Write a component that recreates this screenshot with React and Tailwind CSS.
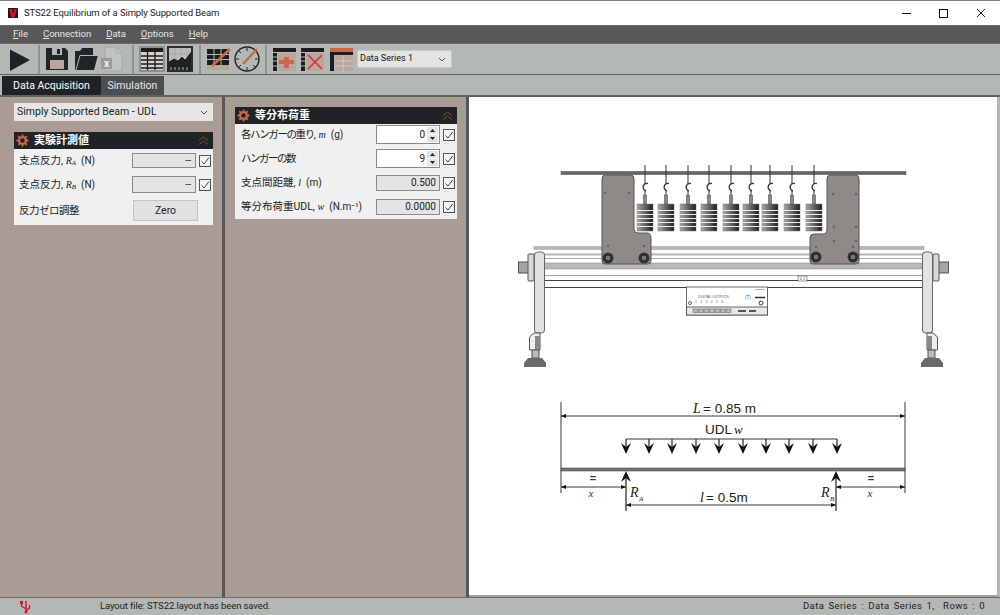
const ui = { fontFamily: 'Roboto, "Noto Sans CJK JP", sans-serif' };

function CheckBox() {
  return (
    <span className="w-[12px] h-[12px] border border-[#555] bg-[#f4f4f4] flex items-center justify-center shrink-0">
      <svg width="10" height="10" viewBox="0 0 10 10">
        <path d="M1.5 5.5 L4 8 L9 1.5" fill="none" stroke="#444" strokeWidth="1" />
      </svg>
    </span>
  );
}

function Gear() {
  return (
    <svg width="13" height="13" viewBox="0 0 14 14" className="shrink-0">
      <circle cx="7" cy="7" r="3.6" fill="none" stroke="#c8694a" strokeWidth="2.4" />
      <path
        d="M7 0.5V3M7 11V13.5M0.5 7H3M11 7H13.5M2.4 2.4L4 4M10 10L11.6 11.6M11.6 2.4L10 4M4 10L2.4 11.6"
        stroke="#c8694a"
        strokeWidth="2"
      />
    </svg>
  );
}

function GroupHeader({ title }) {
  return (
    <div className="h-[17px] bg-[#202326] flex items-center pl-[2px] pr-[4px]">
      <Gear />
      <span className="ml-[5px] text-white text-[11px] font-bold leading-none flex-1">{title}</span>
      <svg width="11" height="10" viewBox="0 0 11 10">
        <path d="M1 4.5L5.5 1L10 4.5M1 8.5L5.5 5L10 8.5" fill="none" stroke="#8a4a38" strokeWidth="1" />
      </svg>
    </div>
  );
}

function Unit({ sym, unit, sub }) {
  return (
    <>
      <i className="text-[10px]" style={{ fontFamily: '"Liberation Serif", serif' }}>
        {sym}
        {sub && <sub className="text-[7px]">{sub}</sub>}
      </i>
      <span className="ml-[5px] text-[10px]">{unit}</span>
    </>
  );
}

function Spinner() {
  return (
    <span className="w-[11px] h-[15px] mr-[1px] flex flex-col gap-[1px] shrink-0">
      <span className="flex-1 bg-[#e4e4e4] flex items-center justify-center">
        <svg width="5" height="3" viewBox="0 0 5 3"><path d="M0 3L2.5 0L5 3Z" fill="#222" /></svg>
      </span>
      <span className="flex-1 bg-[#e4e4e4] flex items-center justify-center">
        <svg width="5" height="3" viewBox="0 0 5 3"><path d="M0 0L2.5 3L5 0Z" fill="#222" /></svg>
      </span>
    </span>
  );
}

function ToolSep({ className }) {
  return <span className={`w-[2px] h-[29px] bg-[#8f948f] mr-[4px] shrink-0 ${className}`} />;
}

function TableIcon() {
  return (
    <svg width="26" height="26" viewBox="0 0 26 26">
      <rect x="0" y="0" width="26" height="26" fill="#8d918d" />
      <rect x="2" y="2" width="22" height="22" fill="#d8d2c8" />
      <rect x="2" y="2" width="22" height="4" fill="#1d1d1d" />
      <path d="M2 10H24M2 14H24M2 18H24M2 22H24M8.5 2V24M16 2V24" stroke="#1d1d1d" strokeWidth="1.3" />
    </svg>
  );
}

function ChartIcon() {
  return (
    <svg width="26" height="26" viewBox="0 0 26 26">
      <rect x="0" y="0" width="26" height="26" fill="#2a2d2e" />
      <rect x="2" y="2" width="22" height="22" fill="#b9bcb6" />
      <path d="M2 8H24M2 13H24M8 2V18M14 2V18M20 2V18" stroke="#9b9f9a" strokeWidth="0.6" />
      <path d="M2 15L7 12L11 14L15 10L18 13L24 5V24H2Z" fill="#1f2122" />
      <path d="M2 15L7 12L11 14L15 10L18 13L24 5" stroke="#f2f2f2" fill="none" strokeWidth="0.7" />
      <path d="M4 24V21M8 24V21M12 24V21M16 24V21M20 24V21" stroke="#d8d8d8" strokeWidth="0.8" />
    </svg>
  );
}

function Toolbar() {
  return (
    <div className="h-[31px] bg-[#b4b8b4] flex items-center pl-[2px] border-b border-[#5f625f] shrink-0">
      <svg width="32" height="26" viewBox="0 0 32 26" className="shrink-0">
        <path d="M8 3.5L28 14L8 25Z" fill="#1f2326" />
      </svg>
      <ToolSep className="ml-[4px]" />
      <svg width="24" height="24" viewBox="0 0 24 24" className="shrink-0 ml-[1px]">
        <path d="M1 1H20L23 4V23H1Z" fill="#222527" />
        <rect x="7" y="1" width="10" height="7" fill="#b4b8b4" />
        <rect x="12" y="2" width="3" height="5" fill="#222527" />
        <rect x="5" y="13" width="14" height="9" fill="#b9a79d" />
      </svg>
      <svg width="24" height="24" viewBox="0 0 24 24" className="shrink-0 ml-[5px]">
        <path d="M1 23V4H6L8 1H19V8H24L20 23Z" fill="#222527" />
        <path d="M2 23L6 8.500H24" fill="none" stroke="#b4b8b4" strokeWidth="1" />
      </svg>
      <svg width="24" height="26" viewBox="0 0 24 26" className="shrink-0 ml-[2px]">
        <path d="M5 1H16L22 7V25H5Z" fill="#c0c3bf" stroke="#a6a9a5" />
        <path d="M16 1V7H22" fill="none" stroke="#a6a9a5" />
        <rect x="1" y="12" width="11" height="11" fill="#9a9c99" />
        <text x="6.5" y="21" fontSize="10" fontWeight="700" fill="#f4f4f4" textAnchor="middle" style={ui}>x</text>
      </svg>
      <ToolSep className="ml-[8px]" />
      <span className="ml-[1px] flex gap-[2px]">
        <TableIcon />
        <ChartIcon />
      </span>
      <ToolSep className="ml-[6px]" />
      <svg width="26" height="26" viewBox="0 0 26 26" className="shrink-0 ml-[1px]">
        <rect x="1" y="3" width="22" height="16" fill="#1d1d1d" />
        <path d="M1 8.500H23M1 13.500H23M8 3V24M15 3V24" stroke="#b4b8b4" strokeWidth="1" />
        <rect x="1" y="19" width="22" height="5" fill="#b9a79d" />
        <path d="M6 20L24 3" stroke="#c8694a" strokeWidth="2.6" />
      </svg>
      <svg width="26" height="26" viewBox="0 0 26 26" className="shrink-0 ml-[2px]">
        <circle cx="13" cy="13" r="12" fill="#b4b8b4" stroke="#222" strokeWidth="1.4" />
        <path d="M13 2V5M13 21V24M2 13H5M21 13H24M5 5L7 7M19 19L21 21M5 21L7 19" stroke="#222" strokeWidth="1" />
        <path d="M9 18L23 3" stroke="#c8694a" strokeWidth="2.4" />
      </svg>
      <ToolSep className="ml-[5px]" />
      <svg width="24" height="24" viewBox="0 0 24 24" className="shrink-0 ml-[1px]">
        <rect x="1" y="1" width="23" height="4" fill="#1d1d1d" />
        <rect x="1" y="6" width="4" height="18" fill="#1d1d1d" />
        <path d="M1 10H5M1 14H5M1 19H5" stroke="#b4b8b4" />
        <rect x="6" y="6" width="18" height="18" fill="#b9a79d" />
        <path d="M12 10H17V13H22V17H17V21H12V17H7V13H12Z" fill="#c8694a" />
      </svg>
      <svg width="24" height="24" viewBox="0 0 24 24" className="shrink-0 ml-[5px]">
        <rect x="0" y="1" width="23" height="4" fill="#1d1d1d" />
        <rect x="0" y="6" width="4" height="18" fill="#1d1d1d" />
        <path d="M0 10H4M0 14H4M0 19H4" stroke="#b4b8b4" />
        <rect x="5" y="6" width="18" height="18" fill="#b9a79d" />
        <path d="M7 8L21 22M21 8L7 22" stroke="#e8213c" strokeWidth="1.5" />
      </svg>
      <svg width="23" height="24" viewBox="0 0 23 24" className="shrink-0 ml-[5px]">
        <rect x="0" y="1" width="23" height="4" fill="#c8694a" />
        <rect x="0" y="5" width="23" height="3" fill="#1d1d1d" />
        <rect x="0" y="8" width="4" height="16" fill="#1d1d1d" />
        <rect x="5" y="9" width="18" height="15" fill="#b9a79d" />
        <path d="M5 14H23M5 19H23M13 9V24" stroke="#cfc8be" />
      </svg>
      <div className="ml-[4px] w-[95px] h-[18px] bg-[#e4e4e4] border border-[#c8c8c8] flex items-center pl-[2px] text-[9px] text-[#111] justify-between pr-[5px]">
        Data Series 1
        <svg width="8" height="5" viewBox="0 0 8 5"><path d="M1 1L4 4L7 1" fill="none" stroke="#555" /></svg>
      </div>
    </div>
  );
}

function Diagram() {
  const hangers = [645, 666, 688, 709, 731, 751, 770, 792, 814];
  const loads = [626, 649, 672, 696, 719, 743, 766, 789, 813, 837];
  const math = { fontFamily: '"Liberation Serif", serif', fontStyle: "italic" };
  const sans = { fontFamily: '"Liberation Sans", sans-serif' };

  const supportEnd = (
    <>
      <rect x="518.500" y="262" width="10" height="11" fill="#a5a5a5" stroke="#555" />
      <rect x="528" y="254" width="6" height="27" rx="1" fill="#d8d8d8" stroke="#555" />
      <rect x="534.500" y="252" width="10" height="81" rx="3" fill="#e1e3df" stroke="#666" />
      <path d="M529.500 337L534 333H540V350H529.500Z" fill="#eee" stroke="#555" />
      <rect x="535" y="336" width="5" height="14" fill="#888" />
      <rect x="532" y="350" width="7" height="8" fill="#bbb" stroke="#555" />
      <path d="M528 358H542L546 363V367H524V363Z" fill="#6a6a6a" />
    </>
  );

  return (
    <svg viewBox="469 97 528 498" className="w-full h-full block">
      <defs>
        <linearGradient id="weight" x1="0" x2="1" y1="0" y2="0">
          <stop offset="0" stopColor="#a8a8a8" />
          <stop offset="1" stopColor="#1e1e1e" />
        </linearGradient>
      </defs>
      {/* beam rails */}
      <rect x="534" y="246.500" width="390" height="3" fill="#b8b8b8" stroke="#999" strokeWidth="0.5" />
      <rect x="534" y="253.500" width="390" height="2" fill="#b4b4b4" />
      <rect x="534" y="263" width="390" height="6" fill="#b8b8b8" stroke="#888" strokeWidth="0.5" />
      <path d="M534 258.500H924M534 275.500H924" stroke="#a4a4a4" strokeWidth="1" />
      <path d="M534 280.500H924M534 287.500H924" stroke="#444" strokeWidth="1" />
      {/* overhead bar */}
      <rect x="561" y="171.500" width="345" height="3" fill="#666" stroke="#444" strokeWidth="0.5" />
      {/* hangers */}
      {hangers.map((x) => (
        <g key={x}>
          <path d={`M${x} 165V184`} stroke="#333" strokeWidth="1" />
          <path d={`M${x + 3} 183.500A3.800 3.800 0 1 0 ${x + 1} 191`} fill="none" stroke="#333" strokeWidth="1.300" />
          <path d={`M${x} 190V195`} stroke="#333" strokeWidth="1" />
          <rect x={x - 1.500} y="195" width="3" height="9" fill="#888" stroke="#444" strokeWidth="0.5" />
          <rect x={x - 8} y="204" width="16" height="27" fill="url(#weight)" stroke="#777" strokeWidth="0.5" />
          <path
            d={`M${x - 8} 210.500H${x + 8}M${x - 8} 214.500H${x + 8}M${x - 8} 218.500H${x + 8}M${x - 8} 222.500H${x + 8}M${x - 8} 226.500H${x + 8}`}
            stroke="#eee"
            strokeWidth="1"
          />
        </g>
      ))}
      {/* carriages */}
      <path
        d="M605 175H631Q634 175 634 179V229Q634 233 638 233H647Q651 233 651 238V261Q651 264 648 264H605Q602 264 602 261V179Q602 175 605 175Z"
        fill="#8e8a88"
        stroke="#555"
      />
      <path
        d="M830 175H856Q859 175 859 179V261Q859 264 856 264H813Q810 264 810 261V238Q810 234 814 234H823Q827 234 827 229V179Q827 175 830 175Z"
        fill="#8e8a88"
        stroke="#555"
      />
      {[[605, 193], [629, 193], [608, 246], [644, 246], [833, 194], [856, 194], [834, 227], [856, 227], [834, 241], [856, 241], [816, 247], [853, 247]].map(([x, y]) => (
        <circle key={`${x}-${y}`} cx={x} cy={y} r="1.300" fill="#666" />
      ))}
      {[[608, 258], [644, 258], [816, 257], [853, 257]].map(([x, y]) => (
        <g key={x}>
          <circle cx={x} cy={y} r="5.500" fill="#333" />
          <circle cx={x} cy={y} r="3" fill="#777" stroke="#222" />
        </g>
      ))}
      {/* end supports */}
      {supportEnd}
      <g transform="translate(1467,0) scale(-1,1)">{supportEnd}</g>
      {/* display unit */}
      <rect x="686.500" y="287" width="81" height="28" fill="#fff" stroke="#444" strokeWidth="0.8" />
      <rect x="686.500" y="307" width="81" height="8" fill="#e8e8e8" stroke="#444" strokeWidth="0.8" />
      <text x="698" y="298" fontSize="3.500" fill="#555" style={sans}>DIGITAL OUTPUTS</text>
      <text x="695" y="303" fontSize="3.500" fill="#666" style={sans} letterSpacing="3.300">123456</text>
      {[693, 698.500, 704, 709.500, 715, 720.500, 726].map((x) => (
        <rect key={x} x={x} y="309" width="5" height="3.500" fill="#bbb" stroke="#555" strokeWidth="0.5" />
      ))}
      <path d="M738 311H746M749 311H756" stroke="#555" strokeWidth="2" />
      <circle cx="690" cy="303" r="1.500" fill="none" stroke="#666" />
      <circle cx="761" cy="303" r="2" fill="none" stroke="#444" />
      <path d="M755 297.500H765" stroke="#333" strokeWidth="1.500" />
      <path d="M755 289.500H765" stroke="#aaa" strokeWidth="1" />
      <text x="745" y="298.500" fontSize="4.500" fill="#555" style={sans}>(T)</text>
      {/* scale tag */}
      <rect x="798" y="276" width="9" height="5" fill="#fff" stroke="#555" strokeWidth="0.6" />
      <text x="802.500" y="280" fontSize="4" fill="#333" textAnchor="middle" style={sans}>0 1</text>

      {/* beam schematic */}
      <g stroke="#222" strokeWidth="0.9" fill="none">
        <path d="M561 402V493M905 402V493M561 416H905M626 439H837" />
        <path d="M561 487H626M836 487H905M626 505H836" />
      </g>
      <rect x="561" y="468" width="344" height="3" fill="#777" stroke="#333" strokeWidth="0.5" />
      {loads.map((x) => (
        <g key={x}>
          <path d={`M${x} 439V450`} stroke="#222" strokeWidth="1.200" />
          <path d={`M${x - 5} 443L${x} 454L${x + 5} 443L${x} 447Z`} fill="#111" />
        </g>
      ))}
      {[626, 836].map((x) => (
        <g key={x}>
          <path d={`M${x} 477V511`} stroke="#222" strokeWidth="1.200" />
          <path d={`M${x - 5} 482L${x} 471L${x + 5} 482L${x} 478Z`} fill="#111" />
        </g>
      ))}
      {[[561, 1], [626, -1], [836, 1], [905, -1]].map(([x, d]) => (
        <path key={x} d={`M${x} 487l${d * 5} -2v4Z`} fill="#111" />
      ))}
      {[[561, 416, 1], [905, 416, -1], [626, 505, 1], [836, 505, -1]].map(([x, y, d]) => (
        <path key={`${x}-${y}`} d={`M${x} ${y}l${d * 5} -2v4Z`} fill="#111" />
      ))}
      <text x="693" y="413" fontSize="14" fill="#222" style={math}>L</text>
      <text x="703" y="413" fontSize="13.500" fill="#222" style={sans}>= 0.85 m</text>
      <text x="705" y="434" fontSize="13.500" fill="#222" style={sans}>UDL</text>
      <text x="734" y="434" fontSize="13" fill="#222" style={math}>w</text>
      <text x="593" y="482" fontSize="11" fontWeight="700" fill="#333" textAnchor="middle" style={sans}>=</text>
      <text x="871" y="482" fontSize="11" fontWeight="700" fill="#333" textAnchor="middle" style={sans}>=</text>
      <text x="591" y="497" fontSize="11" fill="#333" textAnchor="middle" style={math}>x</text>
      <text x="870" y="497" fontSize="11" fill="#333" textAnchor="middle" style={math}>x</text>
      <text x="630" y="497" fontSize="14" fill="#222" style={math}>R</text>
      <text x="639" y="501" fontSize="7" fill="#222" style={math}>A</text>
      <text x="821" y="497" fontSize="14" fill="#222" style={math}>R</text>
      <text x="830" y="501" fontSize="7" fill="#222" style={math}>B</text>
      <text x="700" y="502" fontSize="14" fill="#222" style={math}>l</text>
      <text x="706" y="502" fontSize="13.500" fill="#222" style={sans}>= 0.5m</text>
    </svg>
  );
}

export default function App() {
  return (
    <div className="w-[1000px] h-[615px] overflow-hidden flex flex-col bg-[#b4b8b4] text-[#222]" style={ui}>
      {/* title bar */}
      <div className="h-[25px] bg-white border-t border-[#7f7f7f] flex items-center shrink-0">
        <svg width="10" height="10" viewBox="0 0 10 10" className="ml-[8px]">
          <rect width="10" height="10" fill="#1c1c1c" />
          <path d="M1 1H4L5 6L6 1H9L6.500 9.500H3.500Z" fill="#d8102a" />
        </svg>
        <span className="ml-[6px] text-[9.5px] tracking-[-0.1px] text-[#222] flex-1">STS22 Equilibrium of a Simply Supported Beam</span>
        <span className="w-[37px] h-full flex items-center justify-center">
          <span className="w-[9px] h-[1px] bg-[#111]" />
        </span>
        <span className="w-[37px] h-full flex items-center justify-center">
          <span className="w-[9px] h-[9px] border border-[#111]" />
        </span>
        <span className="w-[37px] mr-[1px] h-full flex items-center justify-center">
          <svg width="10" height="10" viewBox="0 0 10 10"><path d="M1 1L9 9M9 1L1 9" stroke="#222" strokeWidth="1" /></svg>
        </span>
      </div>
      {/* menu */}
      <div className="h-[19px] bg-[#58585a] border-y border-[#6a6a6a] flex items-center pl-[13px] gap-[15px] text-[9.5px] text-[#e6e6e6] shrink-0">
        <span><u>F</u>ile</span>
        <span><u>C</u>onnection</span>
        <span><u>D</u>ata</span>
        <span><u>O</u>ptions</span>
        <span><u>H</u>elp</span>
      </div>
      <Toolbar />
      {/* tabs */}
      <div className="h-[20px] flex items-end pl-[2px] shrink-0">
        <div className="h-[19px] w-[99px] bg-[#202326] text-white text-[10.5px] flex items-center justify-center">Data Acquisition</div>
        <div className="h-[19px] w-[63px] bg-[#4b4d50] text-[#e8e8e8] text-[10.5px] flex items-center justify-center">Simulation</div>
      </div>
      {/* main */}
      <div className="flex-1 min-h-0 flex bg-[#a89c94] border-t-2 border-[#5f625f]">
        <div className="w-[222px] pt-[6px] pl-[14px] pr-[9px] shrink-0">
          <div className="h-[18px] bg-[#e6e6e6] flex items-center justify-between pl-[3px] pr-[5px] text-[10.5px]">
            Simply Supported Beam - UDL
            <svg width="8" height="5" viewBox="0 0 8 5"><path d="M1 1L4 4L7 1" fill="none" stroke="#555" /></svg>
          </div>
          <div className="mt-[11px]">
            <GroupHeader title="実験計測値" />
            <div className="h-[76px] bg-[#f0f0f0] pl-[5px] pr-[2px] pt-[4px] text-[10.5px]">
              <div className="h-[15px] flex items-center">
                <span className="w-[114px]">支点反力, <Unit sym="R" sub="A" unit="(N)" /></span>
                <span className="w-[64px] h-full bg-[#e4e4e4] border border-[#8a8a8a] text-right pr-[4px] leading-[13px] text-[10px]">--</span>
                <span className="ml-[3px]"><CheckBox /></span>
              </div>
              <div className="h-[17px] mt-[8px] flex items-center">
                <span className="w-[114px]">支点反力, <Unit sym="R" sub="B" unit="(N)" /></span>
                <span className="w-[64px] h-full bg-[#e4e4e4] border border-[#8a8a8a] text-right pr-[4px] leading-[15px] text-[10px]">--</span>
                <span className="ml-[3px]"><CheckBox /></span>
              </div>
              <div className="h-[21px] mt-[7px] flex items-center">
                <span className="w-[114px] tracking-[-0.5px]">反力ゼロ調整</span>
                <span className="w-[65px] h-full bg-[#e2e2e2] border border-[#c4c4c4] flex items-center justify-center text-[10.5px]">Zero</span>
              </div>
            </div>
          </div>
        </div>
        <div className="w-[3px] bg-[#58585a] shrink-0" />
        <div className="w-[241px] pt-[10px] pl-[10px] pr-[9px] shrink-0">
          <GroupHeader title="等分布荷重" />
          <div className="h-[95px] bg-[#f0f0f0] pl-[6px] pr-[2px] pt-[1px] text-[10.5px]">
            <div className="h-[19px] flex items-center">
              <span className="w-[136px]"><span className="tracking-[-1.4px]">各ハンガーの重り</span>, <Unit sym="m" unit="(g)" /></span>
              <span className="w-[64px] h-full bg-white border border-[#8a8a8a] flex items-center justify-end">
                <span className="pr-[2px] text-[10px]">0</span>
                <Spinner />
              </span>
              <span className="ml-[3px]"><CheckBox /></span>
            </div>
            <div className="h-[19px] mt-[5px] flex items-center">
              <span className="w-[136px] tracking-[-1.5px]">ハンガーの数</span>
              <span className="w-[64px] h-full bg-white border border-[#8a8a8a] flex items-center justify-end">
                <span className="pr-[2px] text-[10px]">9</span>
                <Spinner />
              </span>
              <span className="ml-[3px]"><CheckBox /></span>
            </div>
            <div className="h-[16px] mt-[7px] flex items-center">
              <span className="w-[136px]">支点間距離, <Unit sym="l" unit="(m)" /></span>
              <span className="w-[64px] h-full bg-[#e4e4e4] border border-[#8a8a8a] text-right pr-[3px] text-[10px] leading-[14px]">0.500</span>
              <span className="ml-[3px]"><CheckBox /></span>
            </div>
            <div className="h-[16px] mt-[8px] flex items-center">
              <span className="w-[136px] whitespace-nowrap">等分布荷重UDL, <Unit sym="w" unit="(N.m⁻¹)" /></span>
              <span className="w-[64px] h-full bg-[#e4e4e4] border border-[#8a8a8a] text-right pr-[3px] text-[10px] leading-[14px]">0.0000</span>
              <span className="ml-[3px]"><CheckBox /></span>
            </div>
          </div>
        </div>
        <div className="w-[3px] bg-[#58585a] shrink-0" />
        <div className="flex-1 bg-white min-w-0 mb-[2px]"><Diagram /></div>
        <div className="w-[3px] bg-[#b4b8b4] shrink-0" />
      </div>
      {/* status bar */}
      <div className="h-[18px] bg-[#b4b8b4] border-t border-[#6a6d6a] flex items-center text-[9.5px] text-[#222] shrink-0">
        <svg width="12" height="14" viewBox="0 0 12 14" className="ml-[19px]">
          <path d="M7 1V13M7 9L2.500 6V3M7 11L10.500 8V5" fill="none" stroke="#d8102a" strokeWidth="1.4" />
          <rect x="1" y="1" width="3" height="3" fill="#d8102a" />
          <circle cx="7" cy="12" r="1.500" fill="#d8102a" />
        </svg>
        <span className="ml-[69px] flex-1 tracking-[-0.1px]">Layout file: STS22.layout has been saved.</span>
        <span className="pr-[15px] tracking-[0.4px] [word-spacing:1.500px]">Data Series : Data Series 1,&nbsp; Rows : 0</span>
      </div>
    </div>
  );
}
